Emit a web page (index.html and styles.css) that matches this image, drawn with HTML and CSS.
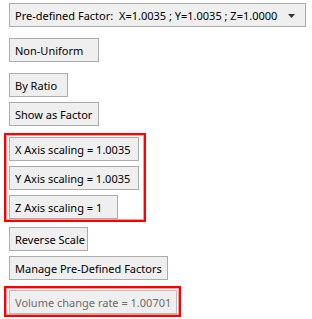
FILE: index.html
```html
<!DOCTYPE html>
<html lang="en">
<head>
    <meta charset="UTF-8">
    <title>Scale Options</title>
    <link rel="stylesheet" href="styles.css">
</head>
<body>
    <div class="panel">
        <div class="combo">
            <span class="combo-text">Pre-defined Factor:&nbsp; X=1.0035 ; Y=1.0035 ; Z=1.0000</span>
            <svg class="combo-arrow" width="7" height="4" viewBox="0 0 7 4"><path d="M0 0h7L3.5 4z" fill="#333"/></svg>
        </div>

        <button class="btn w-nonuniform gap-lg">Non-Uniform</button>
        <button class="btn w-ratio gap-lg">By Ratio</button>
        <button class="btn w-factor">Show as Factor</button>

        <!-- highlighted axis values -->
        <div class="highlight axis-group">
            <button class="btn w-axis">X Axis scaling = 1.0035</button>
            <button class="btn w-axis">Y Axis scaling = 1.0035</button>
            <button class="btn w-zaxis">Z Axis scaling = 1</button>
        </div>

        <button class="btn w-reverse">Reverse Scale</button>
        <button class="btn w-manage">Manage Pre-Defined Factors</button>

        <div class="highlight volume-group">
            <button class="btn w-volume" disabled>Volume change rate = 1.00701</button>
        </div>
    </div>
</body>
</html>
```

FILE: styles.css
```css
html, body {
    margin: 0;
    background: #fff;
    font-family: "Noto Sans", "Open Sans", sans-serif;
    font-size: 11px;
    color: #000;
}
.panel {
    display: flex;
    flex-direction: column;
    align-items: flex-start;
    padding: 3px 0 0 9px;
}
.combo {
    box-sizing: border-box;
    width: 297px;
    height: 24px;
    background: #efefef;
    border: 1px solid #acacac;
    display: flex;
    align-items: center;
    justify-content: space-between;
    padding: 0 10px 0 5px;
    white-space: nowrap;
}
.combo-arrow {
    margin-top: 1px;
}
.btn {
    box-sizing: border-box;
    height: 24px;
    margin: 5px 0 0 0;
    padding: 0 0 0 5px;
    background: #efefef;
    border: 1px solid #acacac;
    border-radius: 0;
    font: inherit;
    color: #000;
    text-align: left;
    white-space: nowrap;
}
.btn:disabled {
    color: #6d6d6d;
    border-color: #bcbcbc;
}
.gap-lg {
    margin-top: 11px;
}
.w-nonuniform { width: 90px; }
.w-ratio { width: 59px; }
.w-factor { width: 90px; }
.w-axis { width: 130px; }
.w-zaxis { width: 109px; }
.w-reverse { width: 79px; }
.w-manage { width: 159px; }
.w-volume { width: 168px; }

.highlight {
    display: flex;
    flex-direction: column;
    align-items: flex-start;
    border: 2px solid #f00;
    box-shadow: inset 0 0 0 1px #ff9a9a;
    margin-left: -5px;
    padding: 0 0 1px 3px;
}
.axis-group {
    width: 142px;
    box-sizing: border-box;
    margin-top: 7px;
}
.axis-group .btn:first-child {
    margin-top: 2px;
}
.volume-group {
    width: 177px;
    box-sizing: border-box;
    margin-top: 6px;
}
.volume-group .btn {
    margin-top: 2px;
}
```
